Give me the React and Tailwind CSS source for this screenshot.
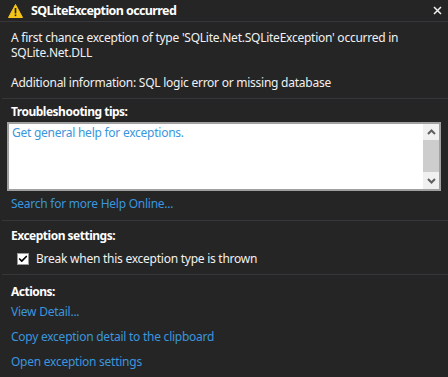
import { Check } from 'lucide-react'

const Link = ({ children, className = '' }) => (
  <div className={`text-[#3a96dd] ${className}`}>{children}</div>
)

const Divider = () => <div className="ml-[2px] h-px bg-[#37373b]" />

const Heading = ({ children, className = '' }) => (
  <div className={`font-bold tracking-[-0.5px] text-white ${className}`}>{children}</div>
)

const App = () => {
  return (
    <div
      className="h-[377px] w-[448px] overflow-hidden bg-[#252526] text-[12px] leading-[15px] tracking-[-0.25px] text-[#f1f1f1]"
      style={{ fontFamily: '"Noto Sans", "Open Sans", sans-serif' }}
    >
      <header className="flex h-[22px] items-center border-b border-[#37373b] pl-[8px] pr-[6px]">
        <svg width="15" height="14" viewBox="0 0 15 14">
          <path d="M7.5 0.5 L14.5 13.5 L0.5 13.5 Z" fill="#f5c518" stroke="#f5c518" strokeLinejoin="round" />
          <rect x="6.7" y="4" width="1.6" height="5.5" fill="#1e1e1e" />
          <rect x="6.7" y="10.5" width="1.6" height="1.6" fill="#1e1e1e" />
        </svg>
        <span className="ml-[8px] text-[12.5px] font-bold tracking-[-0.6px] text-white">SQLiteException occurred</span>
        <svg className="ml-auto" width="9" height="9" viewBox="0 0 9 9">
          <path d="M1 1 L8 8 M8 1 L1 8" stroke="#f1f1f1" strokeWidth="1.5" />
        </svg>
      </header>

      <div className="px-[11px] pb-[8px] pt-[8px]">
        <p>A first chance exception of type 'SQLite.Net.SQLiteException' occurred in SQLite.Net.DLL</p>
        <p className="mt-[15px]">Additional information: SQL logic error or missing database</p>
      </div>
      <Divider />

      <div className="px-[7px] pt-[5px]">
        <Heading className="px-[4px]">Troubleshooting tips:</Heading>
        <div className="mt-[3px] flex h-[69px] border-2 border-[#a0a0a0] bg-white">
          <div className="flex-1 pl-[3px] pt-[1px]">
            <Link>Get general help for exceptions.</Link>
          </div>
          <div className="flex w-[16px] flex-col bg-[#f0f0f0]">
            <div className="flex h-[16px] items-center justify-center">
              <svg width="9" height="6" viewBox="0 0 9 6">
                <path d="M1 5 L4.5 1.5 L8 5" stroke="#606060" strokeWidth="2" fill="none" />
              </svg>
            </div>
            <div className="h-[32px] bg-[#cdcdcd]" />
            <div className="flex flex-1 items-center justify-center">
              <svg width="9" height="6" viewBox="0 0 9 6">
                <path d="M1 1 L4.5 4.5 L8 1" stroke="#606060" strokeWidth="2" fill="none" />
              </svg>
            </div>
          </div>
        </div>
        <Link className="mt-[5px] px-[4px] pb-[9px]">Search for more Help Online...</Link>
      </div>
      <Divider />

      <div className="px-[11px] pb-[8px] pt-[7px]">
        <Heading>Exception settings:</Heading>
        <label className="mt-[8px] flex items-center pl-[6px]">
          <span className="flex h-[12px] w-[12px] items-center justify-center border border-[#999] bg-white">
            <Check className="h-[10px] w-[10px] text-black" strokeWidth={4} />
          </span>
          <span className="ml-[7px]">Break when this exception type is thrown</span>
        </label>
      </div>
      <Divider />

      <div className="px-[11px] pt-[9px]">
        <Heading>Actions:</Heading>
        <div className="mt-[5px] flex flex-col gap-[10px]">
          <Link>View Detail...</Link>
          <Link>Copy exception detail to the clipboard</Link>
          <Link>Open exception settings</Link>
        </div>
      </div>
    </div>
  )
}

export default App
